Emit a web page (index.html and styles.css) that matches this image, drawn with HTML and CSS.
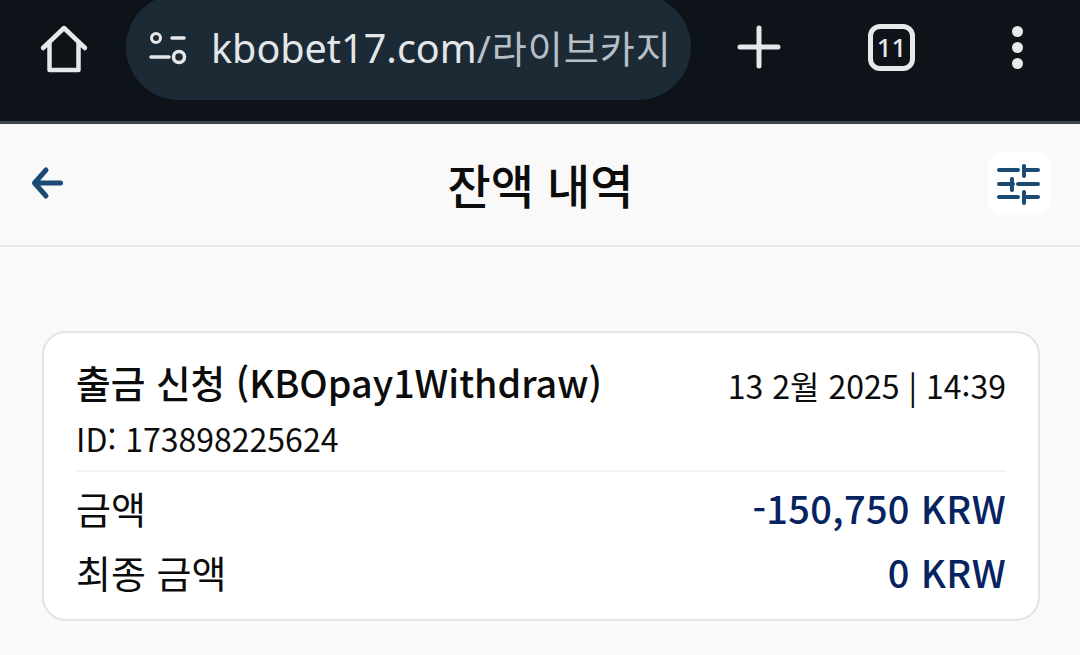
FILE: index.html
```html
<!DOCTYPE html>
<html lang="ko">
<head>
  <meta charset="UTF-8" />
  <meta name="viewport" content="width=device-width, initial-scale=1.0" />
  <title>잔액 내역</title>
  <link rel="stylesheet" href="styles.css">
</head>
<body>
  <!-- 브라우저 툴바 -->
  <div class="toolbar">
    <svg class="tool-home" width="50" height="50" viewBox="0 0 50 50">
      <path d="M4 25 L25 5 L46 25 M10.500 19 V47 H39.500 V19" fill="none" stroke="#e6e8ea" stroke-width="4.500" stroke-linecap="round" stroke-linejoin="round"/>
    </svg>
    <div class="url-bar">
      <svg class="url-icon" width="40" height="36" viewBox="0 0 40 36">
        <circle cx="8" cy="9" r="4.500" fill="none" stroke="#e6e8ea" stroke-width="3"/>
        <path d="M24 9 H36 M3 28 H21" stroke="#e6e8ea" stroke-width="3.500" stroke-linecap="round"/>
        <circle cx="31" cy="28" r="5.500" fill="none" stroke="#e6e8ea" stroke-width="3.500"/>
      </svg>
      <span class="url-text">kbobet17.com<span class="url-path">/라이브카지</span></span>
    </div>
    <svg class="tool-plus" width="44" height="44" viewBox="0 0 44 44">
      <path d="M22 3 V41 M3 22 H41" stroke="#e6e8ea" stroke-width="5" stroke-linecap="round"/>
    </svg>
    <div class="tab-count">11</div>
    <div class="tool-more"><i></i><i></i><i></i></div>
  </div>

  <!-- 페이지 헤더 -->
  <div class="header">
    <svg class="back" width="34" height="34" viewBox="0 0 34 34">
      <path d="M30.500 17 H5 M16 4 L4.500 17 L16 30" fill="none" stroke="#1b4a75" stroke-width="5" stroke-linecap="round" stroke-linejoin="round"/>
    </svg>
    <h1>잔액 내역</h1>
    <div class="filter-btn">
      <svg class="filter-icon" width="44" height="42" viewBox="0 0 44 42">
        <path d="M3 7 H22 M28 7 H42 M28 3 V13 M3 21 H17 M22 21 H42 M16 16 V27 M3 34 H22 M28 34 H42 M28 29 V40" fill="none" stroke="#1b4a75" stroke-width="4" stroke-linecap="round"/>
      </svg>
    </div>
  </div>

  <div class="content">
    <div class="card">
      <div class="card-top">
        <div class="title">출금 신청 (KBOpay1Withdraw)</div>
        <div class="date">13 2월 2025 | 14:39</div>
      </div>
      <div class="tx-id">ID: 173898225624</div>
      <div class="row first">
        <span>금액</span>
        <span class="amount">-150,750 KRW</span>
      </div>
      <div class="row">
        <span>최종 금액</span>
        <span class="amount">0 KRW</span>
      </div>
    </div>
  </div>
</body>
</html>
```

FILE: styles.css
```css
body {
  margin: 0;
  height: 655px;
  overflow: hidden;
  font-family: "Noto Sans CJK KR", "Noto Sans", sans-serif;
  background-color: #f9f9f9;
  color: #0c0c0c;
}

.toolbar {
  display: flex;
  align-items: center;
  height: 94px;
  padding-bottom: 27px;
  background-color: #0e1319;
  border-bottom: 3px solid #3f464b;
}

.tool-home {
  flex: none;
  margin-left: 39px;
  margin-top: 2px;
}

.url-bar {
  flex: none;
  display: flex;
  align-items: center;
  width: 565px;
  height: 106px;
  margin-left: 37px;
  padding-left: 22px;
  box-sizing: border-box;
  border-radius: 53px;
  background-color: #1b2a35;
  color: #e3e7ea;
}

.url-icon {
  flex: none;
}

.url-text {
  margin-left: 23px;
  font-family: "Noto Sans", "Noto Sans CJK KR", sans-serif;
  font-size: 39.500px;
  white-space: nowrap;
}

.url-path {
  font-size: 38px;
  letter-spacing: 1px;
  color: #b6bfc6;
}

.tool-plus {
  flex: none;
  margin-left: 46px;
}

.tab-count {
  flex: none;
  width: 37px;
  height: 37px;
  margin-left: 87px;
  border: 5px solid #e6e8ea;
  border-radius: 12px;
  font-family: "Noto Sans", sans-serif;
  font-size: 26px;
  font-weight: 500;
  line-height: 37px;
  text-align: center;
  color: #e6e8ea;
}

.tool-more {
  flex: none;
  display: flex;
  flex-direction: column;
  gap: 5px;
  margin-left: 97px;
}

.tool-more i {
  width: 11px;
  height: 11px;
  border-radius: 50%;
  background-color: #e6e8ea;
}

.header {
  display: grid;
  grid-template-columns: 1fr auto 1fr;
  align-items: center;
  height: 121px;
  padding: 0 29px 0 30px;
  border-bottom: 2px solid #e6e8ec;
}

.back {
  margin-top: -4px;
}

h1 {
  margin: -2px 0 0;
  font-size: 47px;
  font-weight: 500;
}

.filter-btn {
  display: flex;
  align-items: center;
  justify-content: center;
  justify-self: end;
  width: 63px;
  height: 63px;
  margin-top: -2px;
  border-radius: 14px;
  background-color: #fff;
}

.filter-icon {
  margin-right: 4px;
}

.content {
  padding: 84px 40px 0 42px;
}

.card {
  box-sizing: border-box;
  height: 290px;
  padding: 23px 32px 0 32px;
  background-color: #fff;
  border: 2px solid #e2e4e8;
  border-radius: 24px;
}

.card-top {
  display: flex;
  align-items: center;
  justify-content: space-between;
  height: 50px;
}

.title {
  font-size: 37.700px;
  font-weight: 500;
}

.date {
  font-size: 32px;
  margin-top: 8px;
}

.tx-id {
  font-size: 32px;
  line-height: 44px;
  margin-top: 10px;
  padding-bottom: 10px;
  border-bottom: 2px solid #f3f3f3;
}

.row {
  display: flex;
  align-items: center;
  justify-content: space-between;
  height: 64px;
  font-size: 38px;
}

.row.first {
  margin-top: 3px;
}

.amount {
  font-size: 38px;
  font-weight: 500;
  letter-spacing: 0.300px;
  color: #06245f;
}
```
